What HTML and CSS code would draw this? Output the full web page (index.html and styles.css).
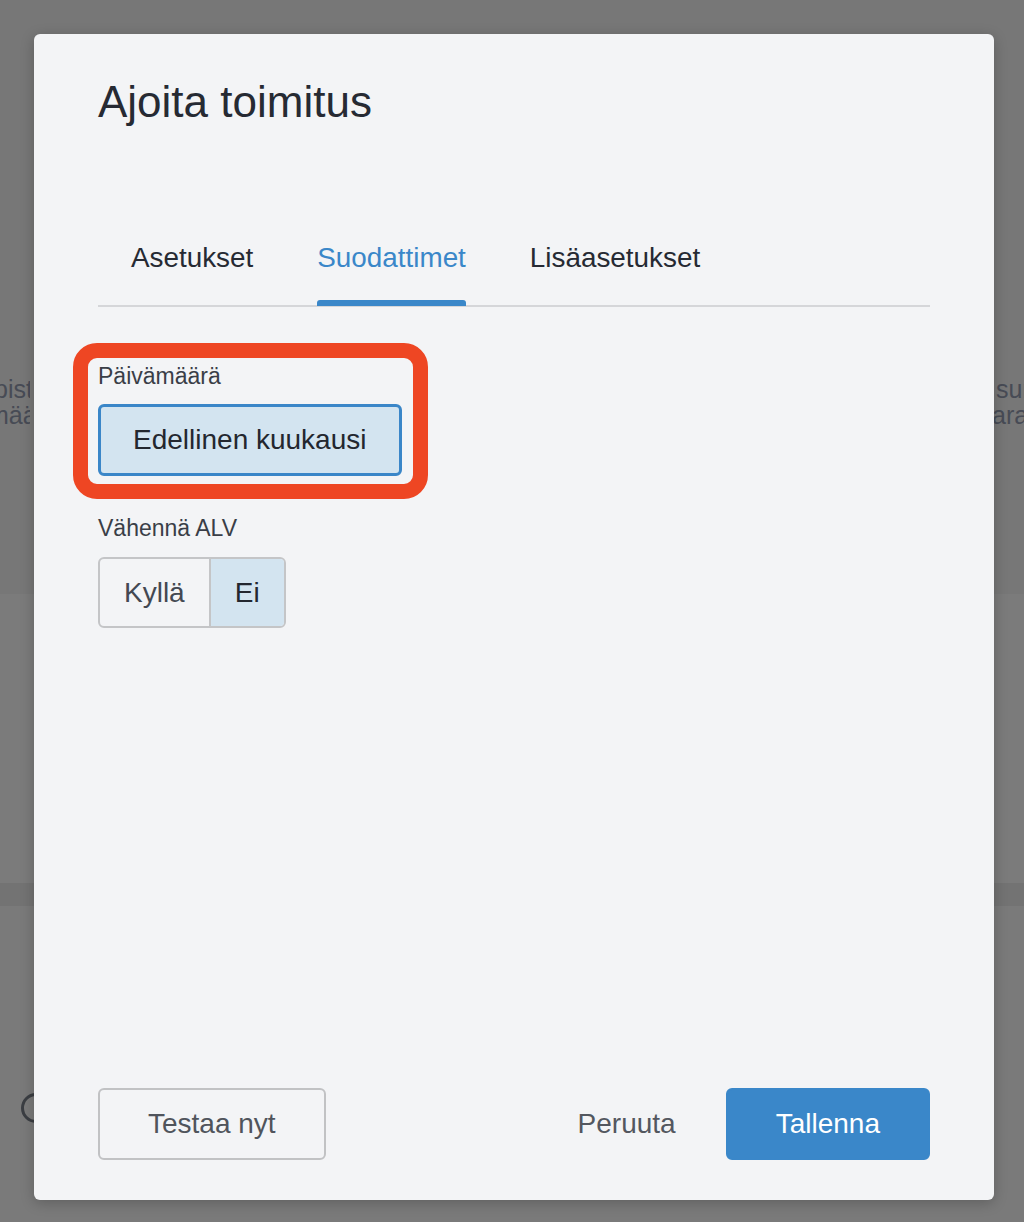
FILE: index.html
```html
<!DOCTYPE html>
<html lang="fi">
<head>
	<meta charset="UTF-8">
	<title>Ajoita toimitus</title>
	<link rel="stylesheet" href="styles.css">
</head>
<body>
	<div class="backdrop">
		<div class="bg-top">
			<div class="bg-row">
				<div class="bg-side bg-left">
					<span class="bg-line bg-line-1">pisteet</span>
					<span class="bg-line bg-line-2">määrä</span>
				</div>
				<div class="bg-side bg-right">
					<span class="bg-line bg-line-3">summa</span>
					<span class="bg-line bg-line-4">ara</span>
				</div>
			</div>
		</div>
		<div class="bg-panel"></div>
		<div class="bg-divider"></div>
		<div class="bg-bottom">
			<div class="bg-circle"></div>
		</div>
	</div>

	<div class="modal">
		<h1 class="modal-title">Ajoita toimitus</h1>

		<div class="tabs">
			<div class="tab">
				<span class="tab-label">Asetukset</span>
				<span class="tab-bar"></span>
			</div>
			<div class="tab active">
				<span class="tab-label">Suodattimet</span>
				<span class="tab-bar"></span>
			</div>
			<div class="tab">
				<span class="tab-label">Lisäasetukset</span>
				<span class="tab-bar"></span>
			</div>
		</div>

		<div class="filters">
			<div class="field field-date">
				<div class="field-label">Päivämäärä</div>
				<button class="range-btn">Edellinen kuukausi</button>
				<div class="highlight"></div>
			</div>
			<div class="field field-vat">
				<div class="field-label">Vähennä ALV</div>
				<div class="segmented">
					<span class="seg-item">Kyllä</span>
					<span class="seg-item selected">Ei</span>
				</div>
			</div>
		</div>

		<div class="modal-footer">
			<button class="btn btn-outline">Testaa nyt</button>
			<button class="btn btn-link">Peruuta</button>
			<button class="btn btn-primary">Tallenna</button>
		</div>
	</div>
</body>
</html>
```

FILE: styles.css
```css
html, body {
	margin: 0;
	padding: 0;
	height: 100%;
}
body {
	font-family: "Liberation Sans", Arial, sans-serif;
	background-color: #7a7a7a;
	overflow: hidden;
}

/* page behind the dialog, dimmed */
.backdrop {
	height: 100%;
	display: flex;
	flex-direction: column;
}
.bg-top {
	height: 594px;
	background-color: #777777;
	padding-top: 377px;
	box-sizing: border-box;
}
.bg-row {
	display: flex;
	justify-content: space-between;
}
.bg-side {
	display: flex;
	flex-direction: column;
	gap: 2px;
	width: 30px;
	overflow: hidden;
	font-size: 25px;
	line-height: 24px;
	color: #474b55;
	white-space: nowrap;
}
.bg-line-1 { margin-left: -6px; }
.bg-line-2 { margin-left: -12px; }
.bg-line-3 { margin-left: 2px; }
.bg-line-4 { margin-left: -2px; }
.bg-panel {
	height: 289px;
	background-color: #7b7b7b;
}
.bg-divider {
	height: 23px;
	background-color: #737373;
}
.bg-bottom {
	flex: 1;
	background-color: #7a7a7a;
	padding: 187px 0 0 21px;
}
.bg-circle {
	width: 24px;
	height: 24px;
	border: 3px solid #3b3e43;
	border-radius: 50%;
}

/* dialog */
.modal {
	position: absolute;
	top: 34px;
	left: 34px;
	width: 960px;
	height: 1166px;
	box-sizing: border-box;
	padding: 42px 64px 40px 64px;
	display: flex;
	flex-direction: column;
	background-color: #f3f4f6;
	border-radius: 6px;
	box-shadow: 0 3px 14px rgba(0,0,0,0.22);
}
.modal-title {
	margin: 0;
	font-size: 44px;
	line-height: 52px;
	font-weight: normal;
	color: #262a33;
}

.tabs {
	margin-top: 113px;
	display: flex;
	gap: 64px;
	padding-left: 33px;
	border-bottom: 2px solid #d5d6d9;
}
.tab {
	display: flex;
	flex-direction: column;
	font-size: 27.85px;
	color: #262a33;
}
.tab-label {
	line-height: 34px;
}
.tab-bar {
	height: 6px;
	margin-top: 25px;
	margin-bottom: -1px;
	border-radius: 3px 3px 0 0;
}
.tab.active {
	color: #3a87c9;
}
.tab.active .tab-bar {
	background-color: #3a87c9;
}

.filters {
	margin-top: 55px;
}
.field {
	position: relative;
}
.field-vat {
	margin-top: 38px;
}
.field-label {
	font-size: 23px;
	line-height: 28px;
	color: #3a3e47;
	margin-bottom: 14px;
}
.field-vat .field-label {
	margin-bottom: 15px;
}
.range-btn {
	display: block;
	margin: 0;
	padding: 16px 32px;
	font-family: inherit;
	font-size: 28px;
	line-height: 34px;
	color: #23272f;
	background-color: #d3e4f0;
	border: 3px solid #3a86c8;
	border-radius: 6px;
}
.highlight {
	position: absolute;
	top: -19px;
	left: -25px;
	width: 355px;
	height: 156px;
	box-sizing: border-box;
	border: 15px solid #ee4623;
	border-radius: 24px;
	pointer-events: none;
}

.segmented {
	display: inline-flex;
	border: 2px solid #c4c5c7;
	border-radius: 6px;
	overflow: hidden;
}
.seg-item {
	padding: 17px 24px 16px 24px;
	font-size: 28px;
	line-height: 34px;
	color: #434852;
}
.seg-item + .seg-item {
	border-left: 2px solid #c4c5c7;
}
.seg-item.selected {
	background-color: #d3e4f0;
	color: #23272f;
}

.modal-footer {
	margin-top: auto;
	display: flex;
	align-items: center;
}
.btn {
	margin: 0;
	padding: 17px 48px;
	font-family: inherit;
	font-size: 28px;
	line-height: 34px;
	border: 2px solid transparent;
	border-radius: 6px;
	background: none;
}
.btn-outline {
	border-color: #c1c2c4;
	color: #50545c;
}
.btn-link {
	margin-left: auto;
	margin-right: 24px;
	padding: 17px 24px;
	color: #53575f;
}
.btn-primary {
	background-color: #3a87c9;
	border-color: #3a87c9;
	color: #ffffff;
}
```
